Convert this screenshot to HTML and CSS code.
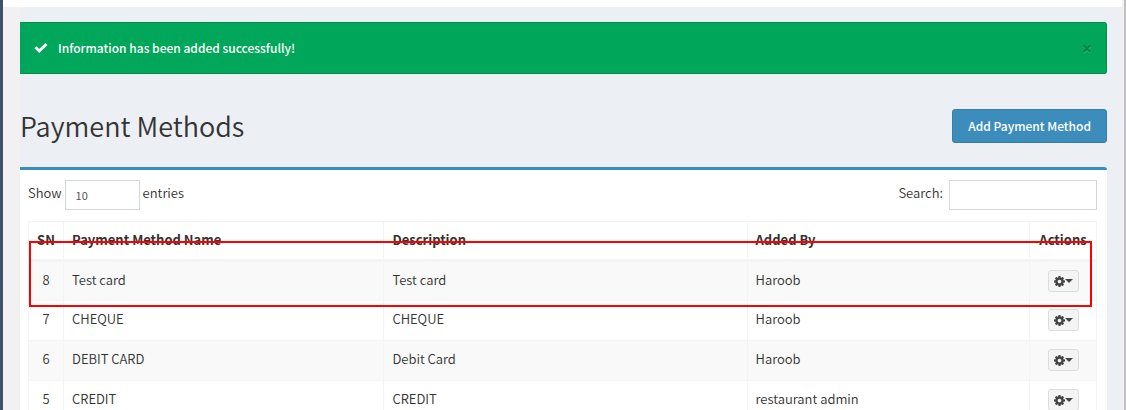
FILE: index.html
```
<!DOCTYPE html>
<html lang="en">

<head>
    <meta charset="UTF-8">
    <meta name="viewport" content="width=device-width, initial-scale=1.0">
    <title>Payment Methods</title>
    <link rel="stylesheet" href="styles.css">
</head>

<body>
    <svg class="sprite" aria-hidden="true">
        <symbol id="cog" viewBox="0 0 1536 1536">
            <path d="M1024 768q0-106-75-181t-181-75-181 75-75 181 75 181 181 75 181-75 75-181zm512-109v222q0 12-8 23t-20 13l-185 28q-19 54-39 91 35 50 107 138 10 12 10 25t-9 23q-27 37-99 108t-94 71q-12 0-26-9l-138-108q-44 23-91 38-16 136-29 186-7 28-36 28h-222q-14 0-24.500-8.500t-11.500-21.500l-28-184q-49-16-90-37l-141 107q-10 9-25 9-14 0-25-11-126-114-165-168-7-10-7-23 0-12 8-23 15-21 51-66.500t54-70.500q-27-50-41-99l-183-27q-13-2-21-12.500t-8-23.500v-222q0-12 8-23t19-13l186-28q14-46 39-92-40-57-107-138-10-12-10-24 0-10 9-23 26-36 98.500-107.500t94.500-71.500q13 0 26 10l138 107q44-23 91-38 16-136 29-186 7-28 36-28h222q14 0 24.500 8.500t11.500 21.500l28 184q49 16 90 37l142-107q9-9 24-9 13 0 25 10 129 119 165 170 7 8 7 22 0 12-8 23-15 21-51 66.500t-54 70.500q26 50 41 98l183 28q13 2 21 12.500t8 23.500z"/>
        </symbol>
    </svg>

    <div class="topbar"></div>
    <main class="content">
        <div class="alert" role="alert">
            <svg class="check" viewBox="0 0 13 10"><path d="M0 5.300 2 3.300 4.700 6 10.900 0 13 2 4.700 10z"/></svg>
            <p>Information has been added successfully!</p>
            <button type="button" class="close" aria-label="Close">×</button>
        </div>

        <header class="content-header">
            <h1>Payment Methods</h1>
            <a href="#" class="btn-primary">Add Payment Method</a>
        </header>

        <section class="box">
            <div class="controls">
                <label>Show
                    <select name="length">
                        <option>10</option>
                        <option>25</option>
                        <option>50</option>
                        <option>100</option>
                    </select>
                    entries</label>
                <label class="search">Search: <input type="search" name="search"></label>
            </div>

            <div class="table-wrap">
                <table>
                    <thead>
                        <tr>
                            <th class="sn">SN</th>
                            <th class="name">Payment Method Name</th>
                            <th class="description">Description</th>
                            <th>Added By</th>
                            <th class="actions">Actions</th>
                        </tr>
                    </thead>
                    <tbody>
                        <tr>
                            <td class="sn">8</td>
                            <td>Test card</td>
                            <td>Test card</td>
                            <td>Haroob</td>
                            <td class="actions"><button type="button" class="btn-action" aria-label="Actions"><svg class="cog"><use href="#cog"/></svg><span class="caret"></span></button></td>
                        </tr>
                        <tr>
                            <td class="sn">7</td>
                            <td>CHEQUE</td>
                            <td>CHEQUE</td>
                            <td>Haroob</td>
                            <td class="actions"><button type="button" class="btn-action" aria-label="Actions"><svg class="cog"><use href="#cog"/></svg><span class="caret"></span></button></td>
                        </tr>
                        <tr>
                            <td class="sn">6</td>
                            <td>DEBIT CARD</td>
                            <td>Debit Card</td>
                            <td>Haroob</td>
                            <td class="actions"><button type="button" class="btn-action" aria-label="Actions"><svg class="cog"><use href="#cog"/></svg><span class="caret"></span></button></td>
                        </tr>
                        <tr>
                            <td class="sn">5</td>
                            <td>CREDIT</td>
                            <td>CREDIT</td>
                            <td>restaurant admin</td>
                            <td class="actions"><button type="button" class="btn-action" aria-label="Actions"><svg class="cog"><use href="#cog"/></svg><span class="caret"></span></button></td>
                        </tr>
                    </tbody>
                </table>
                <div class="highlight"></div>
            </div>
        </section>
    </main>
</body>

</html>
```
FILE: styles.css
```
* {
    box-sizing: border-box;
}

body {
    min-height: 100vh;
    margin: 0;
    display: flex;
    flex-direction: column;
    border-left: 3px solid #444f69;
    border-right: 2px solid #c1c1c1;
    background-color: #f1f1f1;
    color: #333;
    font-family: "Noto Sans CJK SC", "Open Sans", sans-serif;
    font-size: 13px;
    font-weight: 350;
    line-height: 20px;
}

button,
input,
select {
    font-family: inherit;
}

.sprite {
    display: none;
}

.topbar {
    flex: none;
    height: 7px;
    margin-right: 2px;
    background-color: #fff;
}

.content {
    flex: 1;
    margin: 0 2px 0 17px;
    padding: 15px 15px 0 0;
    background-color: #ecf0f5;
}

.alert {
    display: flex;
    align-items: center;
    gap: 10px;
    height: 52px;
    padding: 0 14px;
    border: 1px solid #008d4c;
    border-left: 0;
    border-radius: 0 3px 3px 0;
    background-color: #00a65a;
    color: #fff;
    font-size: 12px;
    font-weight: 500;
}

.alert p {
    flex: 1;
    margin: 0;
}

.check {
    width: 14px;
    height: 10px;
    fill: #fff;
}

.close {
    padding: 0;
    border: 0;
    background: none;
    color: #000;
    font-family: "Open Sans", sans-serif;
    font-size: 18px;
    font-weight: 700;
    line-height: 20px;
    text-shadow: 0 1px 0 #fff;
    opacity: 0.2;
    cursor: pointer;
}

.content-header {
    display: flex;
    align-items: center;
    justify-content: space-between;
    padding: 35px 0 24px;
}

h1 {
    margin: 0;
    font-size: 27px;
    font-weight: 350;
    line-height: 34px;
}

.btn-primary {
    padding: 6px 15px;
    border: 1px solid #367fa9;
    border-radius: 3px;
    background-color: #3c8dbc;
    color: #fff;
    font-size: 12px;
    font-weight: 500;
    text-decoration: none;
}

.box {
    padding: 10px 10px 10px 8px;
    border-top: 3px solid #3c8dbc;
    border-radius: 0 3px 3px 0;
    background-color: #fff;
}

.controls {
    display: flex;
    justify-content: space-between;
    margin-bottom: 11px;
}

.controls label {
    display: flex;
    gap: 3px;
    line-height: 26px;
}

.controls .search {
    gap: 6px;
}

.controls select,
.controls input {
    height: 30px;
    padding: 0 10px;
    border: 1px solid #d2d6de;
    border-radius: 0;
    background-color: #fff;
    color: #555;
    font-size: 11px;
    appearance: none;
}

.controls select {
    width: 75px;
}

.controls input {
    width: 148px;
}

.table-wrap {
    position: relative;
}

table {
    width: 100%;
    table-layout: fixed;
    border-collapse: collapse;
}

th,
td {
    height: 40px;
    padding: 8px 8px 0;
    border: 1px solid #f4f4f4;
    text-align: left;
    vertical-align: top;
}

th {
    height: 39px;
    border-bottom-width: 3px;
    font-weight: 700;
}

tbody tr:nth-child(odd) {
    background-color: #f9f9f9;
}

.name {
    width: 30%;
}

.description {
    width: 34%;
}

.sn {
    width: 35px;
    text-align: center;
}

.actions {
    width: 67px;
    text-align: center;
}

.btn-action {
    display: inline-flex;
    align-items: center;
    justify-content: center;
    width: 31px;
    height: 22px;
    padding: 0;
    border: 1px solid #ddd;
    border-radius: 3px;
    background-color: #f4f4f4;
    color: #444;
    vertical-align: middle;
    cursor: pointer;
}

.cog {
    width: 11px;
    height: 11px;
    fill: #444;
}

.caret {
    border-top: 4px solid #444;
    border-right: 4px solid transparent;
    border-left: 4px solid transparent;
}

/* frame around the newest row */
.highlight {
    position: absolute;
    top: 20px;
    right: 5px;
    left: 1px;
    height: 66px;
    border: 2px solid #f00;
    pointer-events: none;
}
```
